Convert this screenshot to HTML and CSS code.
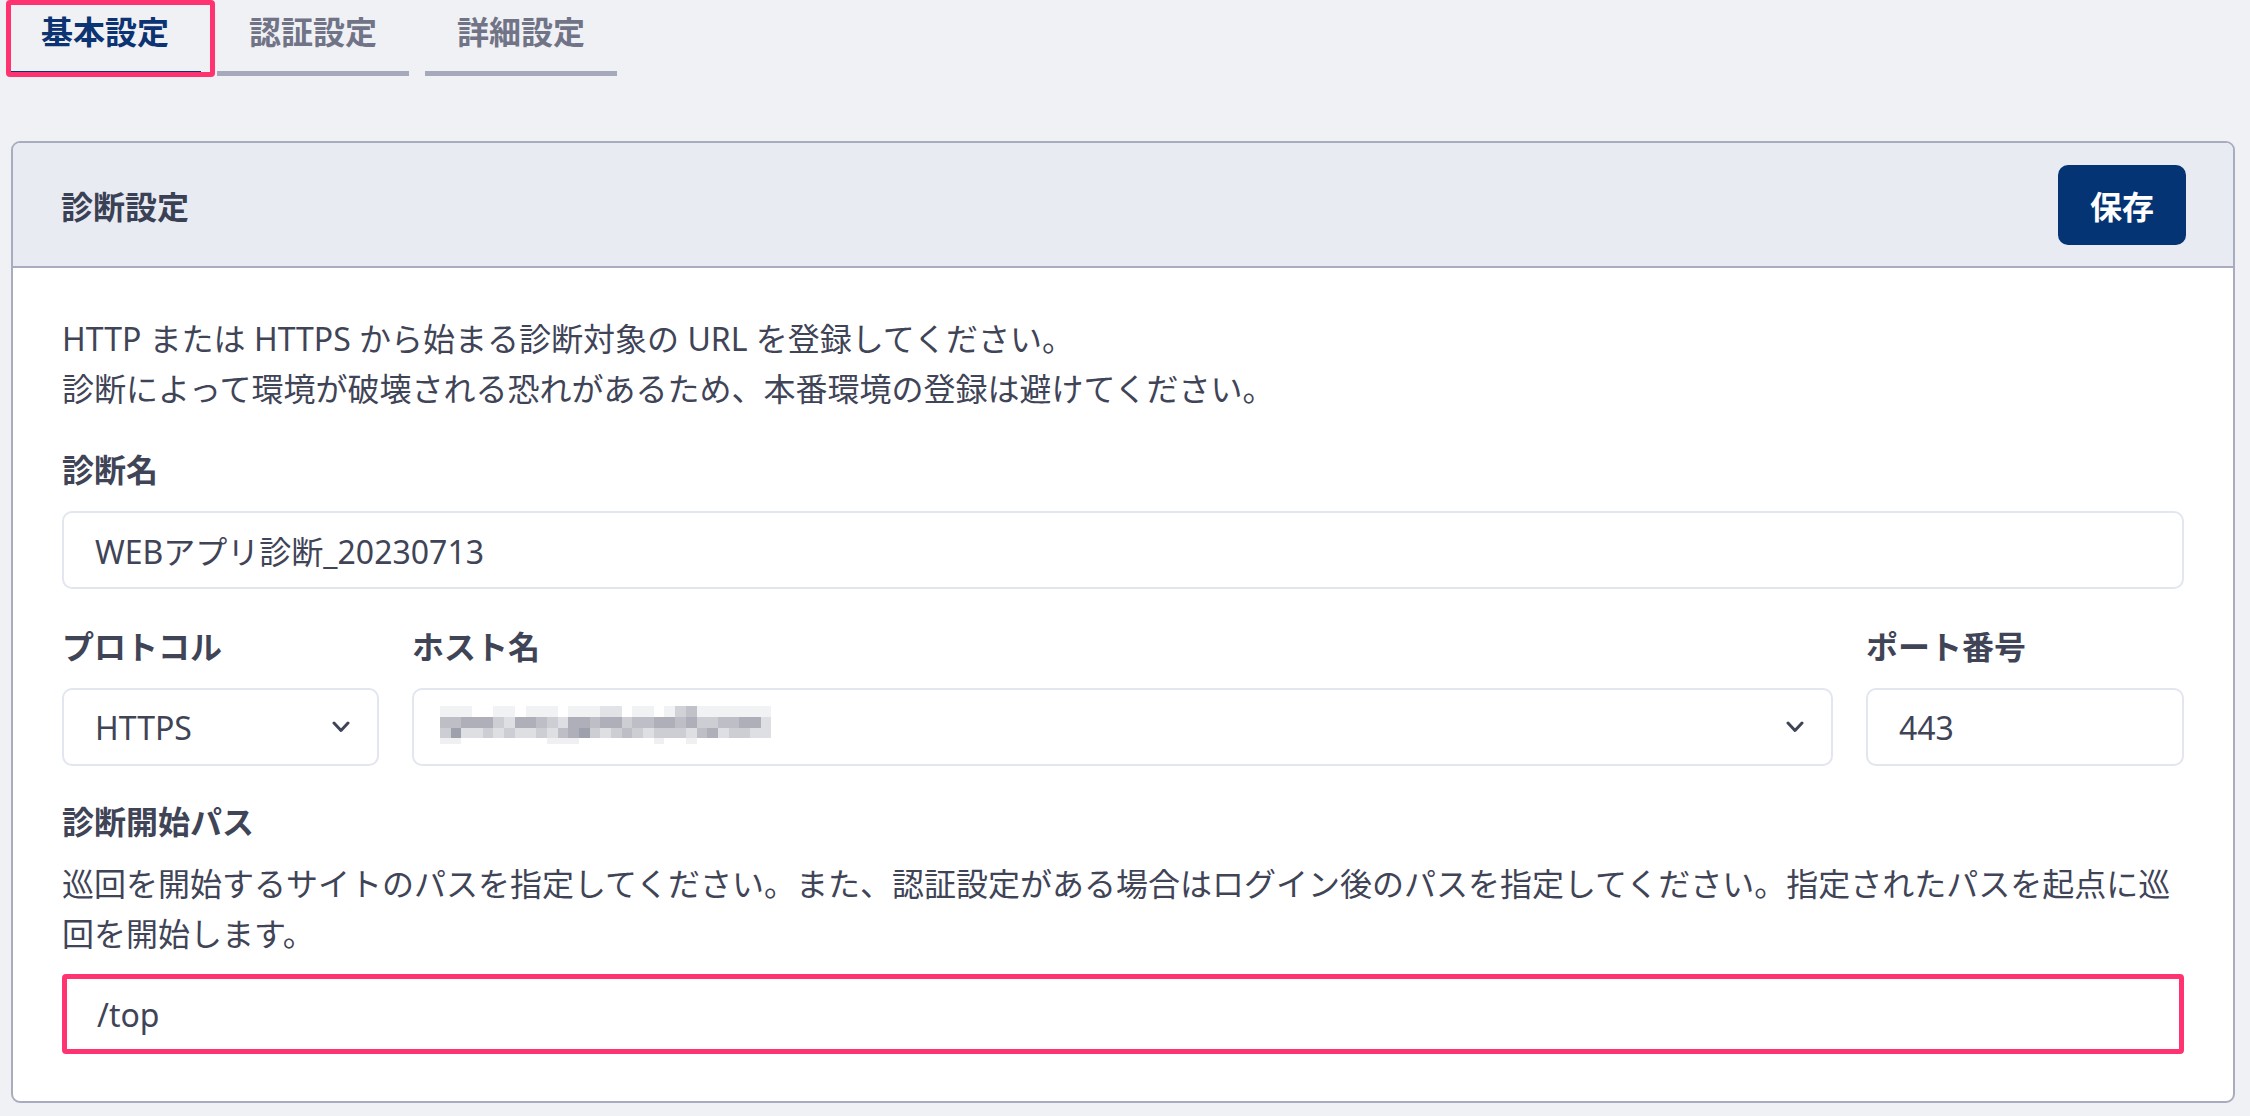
FILE: index.html
```html
<!DOCTYPE html>
<html lang="ja">
<head>
    <meta charset="UTF-8">
    <meta name="viewport" content="width=device-width, initial-scale=1.0">
    <title>診断設定</title>
    <link rel="stylesheet" href="styles.css">
</head>
<body>
    <nav class="tabs">
        <div class="tab tab-active">基本設定<span class="tab-mark"></span></div>
        <div class="tab">認証設定</div>
        <div class="tab">詳細設定</div>
    </nav>

    <section class="card">
        <div class="card-header">
            <h2 class="card-title">診断設定</h2>
            <button class="btn-save">保存</button>
        </div>
        <div class="card-body">
            <p class="intro">HTTP または HTTPS から始まる診断対象の URL を登録してください。<br>診断によって環境が破壊される恐れがあるため、本番環境の登録は避けてください。</p>

            <div class="field">
                <span class="label">診断名</span>
                <div class="input">WEBアプリ診断_20230713</div>
            </div>

            <div class="row">
                <div class="field field-protocol">
                    <span class="label">プロトコル</span>
                    <div class="input select">
                        <span>HTTPS</span>
                        <svg class="chevron" width="18" height="12" viewBox="0 0 18 12"><polyline points="2,2 9,9.5 16,2" fill="none" stroke="#3f4457" stroke-width="3" stroke-linecap="round" stroke-linejoin="round"/></svg>
                    </div>
                </div>
                <div class="field field-host">
                    <span class="label">ホスト名</span>
                    <div class="input select host">
                        <!-- ホスト名はモザイク -->
                        <svg class="mosaic" width="342" height="43" viewBox="0 0 32 4" preserveAspectRatio="none" shape-rendering="crispEdges">
                            <g fill="#3d4158">
                                <rect x="0" y="0" width="3" height="1" opacity=".07"/>
                                <rect x="5" y="0" width="2" height="1" opacity=".07"/>
                                <rect x="8" y="0" width="3" height="1" opacity=".07"/>
                                <rect x="12" y="0" width="3" height="1" opacity=".07"/>
                                <rect x="15" y="0" width="2" height="1" opacity=".15"/>
                                <rect x="18" y="0" width="2" height="1" opacity=".07"/>
                                <rect x="21" y="0" width="1" height="1" opacity=".07"/>
                                <rect x="22" y="0" width="1" height="1" opacity=".24"/>
                                <rect x="23" y="0" width="1" height="1" opacity=".32"/>
                                <rect x="24" y="0" width="7" height="1" opacity=".07"/>

                                <rect x="0" y="1" width="2" height="1" opacity=".34"/>
                                <rect x="2" y="1" width="3" height="1" opacity=".42"/>
                                <rect x="5" y="1" width="1" height="1" opacity=".26"/>
                                <rect x="6" y="1" width="1" height="1" opacity=".17"/>
                                <rect x="7" y="1" width="2" height="1" opacity=".42"/>
                                <rect x="9" y="1" width="1" height="1" opacity=".34"/>
                                <rect x="10" y="1" width="1" height="1" opacity=".26"/>
                                <rect x="11" y="1" width="1" height="1" opacity=".17"/>
                                <rect x="12" y="1" width="2" height="1" opacity=".42"/>
                                <rect x="14" y="1" width="1" height="1" opacity=".34"/>
                                <rect x="15" y="1" width="2" height="1" opacity=".42"/>
                                <rect x="17" y="1" width="1" height="1" opacity=".26"/>
                                <rect x="18" y="1" width="2" height="1" opacity=".34"/>
                                <rect x="20" y="1" width="2" height="1" opacity=".42"/>
                                <rect x="22" y="1" width="1" height="1" opacity=".34"/>
                                <rect x="23" y="1" width="1" height="1" opacity=".42"/>
                                <rect x="24" y="1" width="2" height="1" opacity=".26"/>
                                <rect x="26" y="1" width="2" height="1" opacity=".34"/>
                                <rect x="28" y="1" width="2" height="1" opacity=".42"/>
                                <rect x="30" y="1" width="1" height="1" opacity=".17"/>

                                <rect x="0" y="2" width="1" height="1" opacity=".26"/>
                                <rect x="1" y="2" width="1" height="1" opacity=".5"/>
                                <rect x="2" y="2" width="2" height="1" opacity=".17"/>
                                <rect x="4" y="2" width="1" height="1" opacity=".26"/>
                                <rect x="5" y="2" width="1" height="1" opacity=".17"/>
                                <rect x="6" y="2" width="1" height="1" opacity=".26"/>
                                <rect x="7" y="2" width="2" height="1" opacity=".17"/>
                                <rect x="9" y="2" width="1" height="1" opacity=".26"/>
                                <rect x="10" y="2" width="1" height="1" opacity=".17"/>
                                <rect x="11" y="2" width="1" height="1" opacity=".34"/>
                                <rect x="12" y="2" width="1" height="1" opacity=".42"/>
                                <rect x="13" y="2" width="1" height="1" opacity=".5"/>
                                <rect x="14" y="2" width="1" height="1" opacity=".26"/>
                                <rect x="15" y="2" width="1" height="1" opacity=".17"/>
                                <rect x="16" y="2" width="1" height="1" opacity=".26"/>
                                <rect x="17" y="2" width="1" height="1" opacity=".34"/>
                                <rect x="18" y="2" width="1" height="1" opacity=".26"/>
                                <rect x="19" y="2" width="1" height="1" opacity=".17"/>
                                <rect x="20" y="2" width="3" height="1" opacity=".26"/>
                                <rect x="23" y="2" width="1" height="1" opacity=".17"/>
                                <rect x="24" y="2" width="1" height="1" opacity=".34"/>
                                <rect x="25" y="2" width="1" height="1" opacity=".42"/>
                                <rect x="26" y="2" width="1" height="1" opacity=".17"/>
                                <rect x="27" y="2" width="2" height="1" opacity=".26"/>
                                <rect x="29" y="2" width="2" height="1" opacity=".17"/>

                                <rect x="0" y="3" width="2" height=".5" opacity=".08"/>
                                <rect x="10" y="3" width="3" height=".5" opacity=".08"/>
                                <rect x="20" y="3" width="1" height=".5" opacity=".08"/>
                                <rect x="23" y="3" width="1" height=".5" opacity=".08"/>
                            </g>
                        </svg>
                        <svg class="chevron" width="18" height="12" viewBox="0 0 18 12"><polyline points="2,2 9,9.5 16,2" fill="none" stroke="#3f4457" stroke-width="3" stroke-linecap="round" stroke-linejoin="round"/></svg>
                    </div>
                </div>
                <div class="field field-port">
                    <span class="label">ポート番号</span>
                    <div class="input">443</div>
                </div>
            </div>

            <div class="field">
                <span class="label">診断開始パス</span>
                <p class="hint">巡回を開始するサイトのパスを指定してください。また、認証設定がある場合はログイン後のパスを指定してください。指定されたパスを起点に巡回を開始します。</p>
                <div class="input input-highlight">/top</div>
            </div>
        </div>
    </section>
</body>
</html>
```

FILE: styles.css
```css
body {
    margin: 0;
    background-color: #f0f1f4;
    font-family: "Noto Sans", "Noto Sans CJK JP", sans-serif;
    font-size: 32px;
    color: #3f4457;
}

/* タブ */
.tabs {
    display: flex;
    gap: 16px;
    padding-left: 9px;
}
.tab {
    position: relative;
    width: 192px;
    padding: 7px 0 14px;
    line-height: 50px;
    text-align: center;
    font-weight: 700;
    color: #717487;
    border-bottom: 5px solid #a6a9bb;
}
.tab-active {
    color: #0c3372;
    border-bottom-color: #0c3372;
}
.tab-mark {
    position: absolute;
    left: -3px;
    top: 0;
    width: 209px;
    height: 77px;
    box-sizing: border-box;
    border: 5px solid #ff3370;
    border-radius: 4px;
}

/* カード */
.card {
    margin: 65px 15px 0 11px;
    background-color: #fff;
    border: 2px solid #a9acbe;
    border-radius: 9px;
    overflow: hidden;
}
.card-header {
    display: flex;
    align-items: center;
    justify-content: space-between;
    height: 123px;
    padding: 0 47px 0 48px;
    background-color: #e8ebf2;
    border-bottom: 2px solid #a9acbe;
}
.card-title {
    margin: 0;
    font-size: 32px;
    font-weight: 700;
    color: #3b4155;
}
.btn-save {
    width: 128px;
    height: 80px;
    border: none;
    border-radius: 10px;
    background-color: #053475;
    color: #fff;
    font: inherit;
    font-weight: 700;
    cursor: pointer;
}
.card-body {
    padding: 46px 49px 47px;
}
.intro {
    margin: 0;
    line-height: 50px;
}

/* フォーム */
.field {
    margin-top: 31px;
}
.label {
    display: block;
    font-weight: 700;
    line-height: 50px;
    margin-bottom: 16px;
}
.input {
    display: flex;
    align-items: center;
    height: 78px;
    box-sizing: border-box;
    padding: 0 27px 0 31px;
    border: 2px solid #e1e6ef;
    border-radius: 10px;
    background-color: #fff;
}
.select {
    justify-content: space-between;
}
.host {
    padding-left: 26px;
}
.mosaic {
    display: block;
}
.chevron {
    display: block;
    flex-shrink: 0;
}
.row {
    display: flex;
    gap: 33px;
    margin-top: 33px;
}
.row .field {
    margin-top: 0;
}
.field-protocol {
    width: 317px;
}
.field-host {
    flex: 1;
}
.field-port {
    width: 318px;
}
.hint {
    margin: -4px 0 15px 0;
    line-height: 50px;
}
.input-highlight {
    height: 80px;
    padding-left: 30px;
    border: 5px solid #ff3370;
    border-radius: 4px;
}
```
